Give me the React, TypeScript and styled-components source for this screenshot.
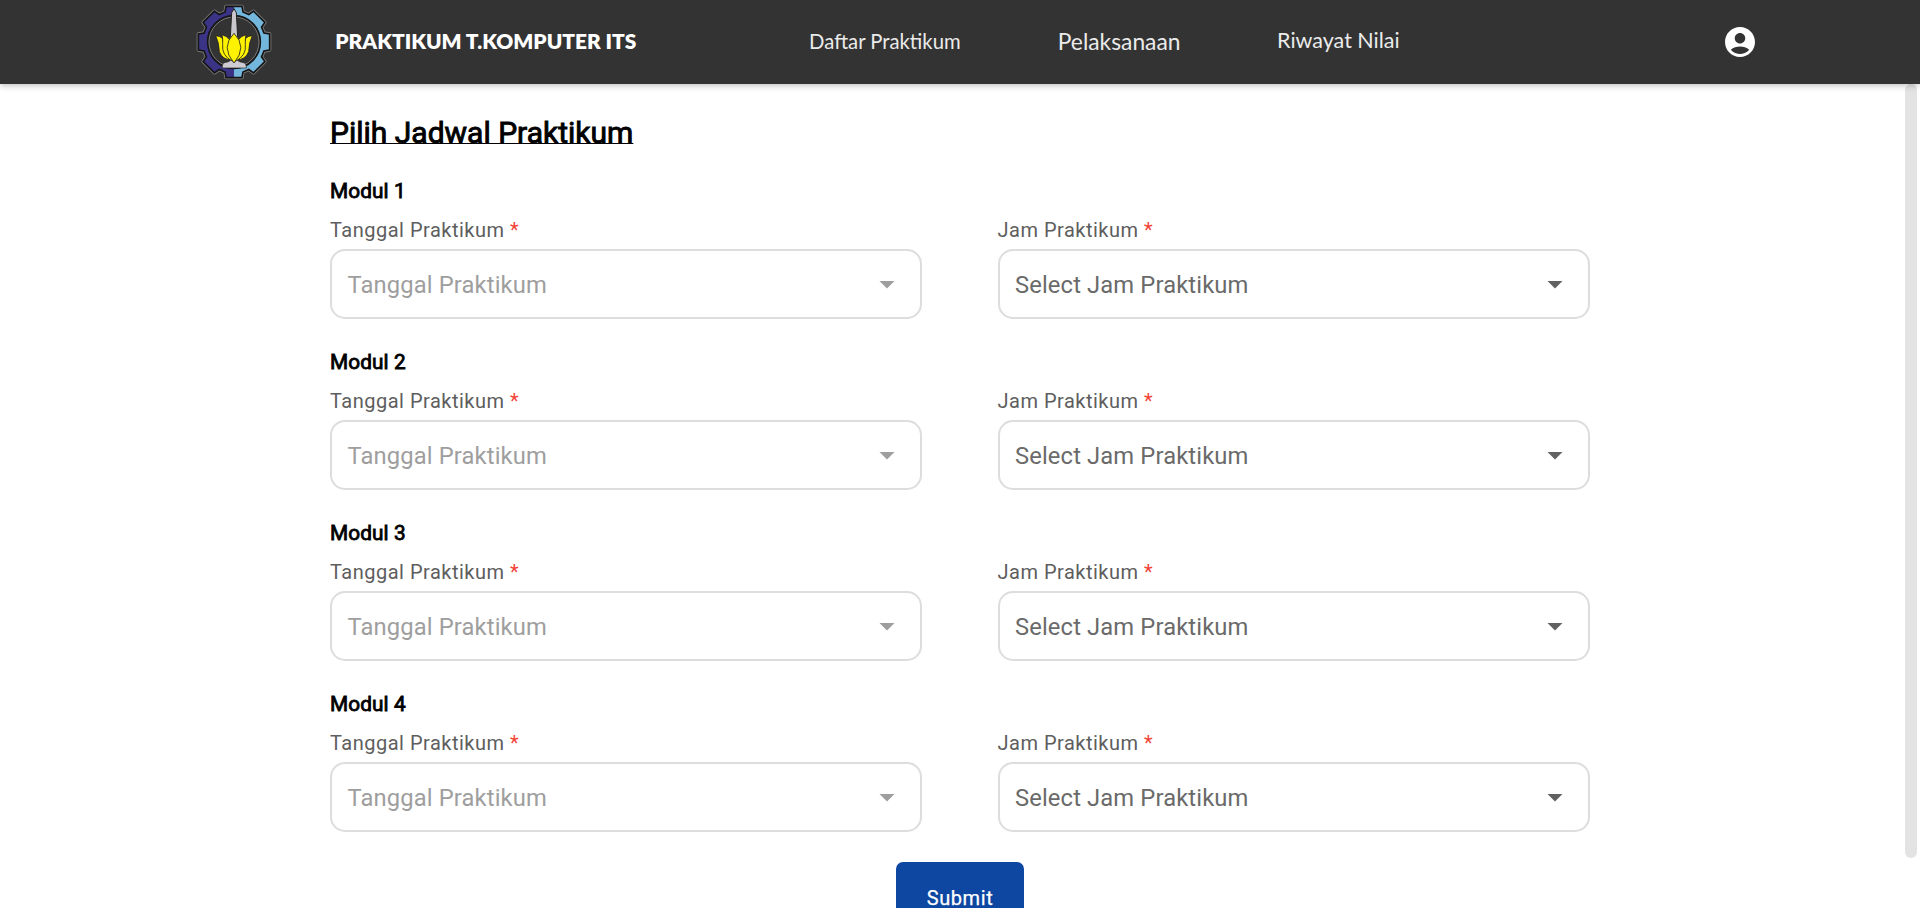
import React from 'react';
import styled, { createGlobalStyle } from 'styled-components';

const GlobalStyle = createGlobalStyle`
  *, *::before, *::after { box-sizing: border-box; }
  html, body { margin: 0; padding: 0; height: 100%; overflow: hidden; background: #fff; }
  body { font-family: Roboto, 'Liberation Sans', sans-serif; }
  h1, h2, p { margin: 0; font-weight: 400; }
`;

const Page = styled.div`
  height: 100vh;
  display: flex;
  flex-direction: column;
  overflow: hidden;
`;

const Header = styled.header`
  position: relative;
  z-index: 1;
  flex: none;
  height: 84px;
  padding-left: 194.7px;
  display: grid;
  grid-template-columns: 140.6px 473.8px 248.7px 219.3px 444.9px auto;
  align-items: center;
  background: #333;
  box-shadow: 0 2px 4px -1px rgba(0, 0, 0, 0.12), 0 4px 5px rgba(0, 0, 0, 0.07), 0 1px 10px rgba(0, 0, 0, 0.06);
`;

const Brand = styled.span`
  font: 800 20.9px/26px Lato, sans-serif;
  color: #fff;
  white-space: nowrap;
  padding-bottom: 1.4px;
`;

const NavLink = styled.a<{ $size: number; $lift: number }>`
  font: 400 ${(p) => p.$size}px/28px Lato, sans-serif;
  color: #ebebeb;
  white-space: nowrap;
  padding-bottom: ${(p) => p.$lift}px;
`;

const ProfileButton = styled.button`
  width: 36px;
  height: 36px;
  padding: 0;
  border: 0;
  background: none;
  color: #fff;
  svg { display: block; }
`;

const Body = styled.div`
  flex: 1;
  min-height: 0;
  display: flex;
  justify-content: space-between;
  align-items: flex-start;
`;

const Form = styled.form`
  width: 1260px;
  margin-left: 330px;
  padding-top: 31px;
  display: flex;
  flex-direction: column;
`;

const Title = styled.h1`
  align-self: flex-start;
  font-size: 30px;
  line-height: 36px;
  color: #000;
  -webkit-text-stroke: 0.9px #000;
  text-decoration: underline;
  text-decoration-thickness: 1px;
  text-underline-offset: 0;
  text-decoration-skip-ink: none;
`;

const Modules = styled.div`
  margin-top: 28px;
  display: flex;
  flex-direction: column;
  gap: 31px;
`;

const ModuleTitle = styled.h2`
  font-size: 20.8px;
  line-height: 24px;
  letter-spacing: 0.08px;
  color: #000;
  -webkit-text-stroke: 0.8px #000;
`;

const Fields = styled.div`
  margin-top: 15px;
  display: grid;
  grid-template-columns: 592px 592.5px;
  column-gap: 75.5px;
`;

const Label = styled.p`
  font-size: 20px;
  line-height: 24px;
  letter-spacing: 0.5px;
  color: #5e5e5e;
`;

const Required = styled.span`
  color: #f44336;
`;

const SelectBox = styled.div<{ $disabled?: boolean }>`
  margin-top: 7px;
  height: 70.4px;
  margin-bottom: -0.4px;
  padding: 0 15px 0 15.5px;
  border: 2px solid #ddd;
  border-radius: 15px;
  display: flex;
  align-items: center;
  justify-content: space-between;
  font-size: 23.75px;
  letter-spacing: 0.13px;
  color: ${(p) => (p.$disabled ? '#9e9e9e' : '#6a6a6a')};
  svg {
    display: block;
    color: ${(p) => (p.$disabled ? '#9e9e9e' : '#616161')};
  }
`;

const Placeholder = styled.span`
  padding-top: 2px;
`;

const SubmitButton = styled.button`
  align-self: center;
  flex: none;
  margin-top: 30.3px;
  width: 128px;
  height: 72px;
  padding: 0;
  border: 0;
  border-radius: 7px;
  background: #0d47a1;
  color: #fff;
  font: 400 20px/24px Roboto, sans-serif;
  letter-spacing: 0.6px;
  -webkit-text-stroke: 0.25px #fff;
`;

const ScrollThumb = styled.div`
  width: 12px;
  height: 774px;
  margin-right: 3px;
  border-radius: 6px;
  background: #e3e3e3;
`;

const gearPath = (() => {
  const points: string[] = [];
  for (let i = 0; i < 8; i++) {
    const a = (i * Math.PI) / 4;
    [[-27, -90], [-24, -107], [24, -107], [27, -90]].forEach(([x, y]) => {
      const px = 162 + x * Math.cos(a) - y * Math.sin(a);
      const py = 126 + x * Math.sin(a) + y * Math.cos(a);
      points.push(`${px.toFixed(1)} ${py.toFixed(1)}`);
    });
  }
  return `M${points.join('L')}Z`;
})();

const Logo = () => (
  <svg width="78" height="78" viewBox="45 9 234 234">
    <defs>
      <clipPath id="leftHalf"><rect x="40" y="0" width="122" height="260" /></clipPath>
      <clipPath id="rightHalf"><rect x="162" y="0" width="122" height="260" /></clipPath>
    </defs>
    <path d={gearPath} fill="#111" stroke="#7d7d7d" strokeWidth="10" strokeLinejoin="round" />
    <path d={gearPath} fill="#3b3486" stroke="#151515" strokeWidth="5" clipPath="url(#leftHalf)" />
    <path d={gearPath} fill="#74b7dc" stroke="#151515" strokeWidth="5" clipPath="url(#rightHalf)" />
    <circle cx="162" cy="126" r="79" fill="#333" stroke="#151515" strokeWidth="5" />
    <circle cx="162" cy="126" r="75" fill="none" stroke="#777" strokeWidth="3" />
    <path d="M151 112l4-74 7-12 7 12 4 74z" fill="#c9c7cc" stroke="#222" strokeWidth="3" />
    <path d="M127 204c0-13 3-16 12-17 10-2 14-6 15-14h16c1 8 5 12 15 14 9 1 14 4 14 17z" fill="#cfcbd2" stroke="#222" strokeWidth="2" />
    <g fill="#fff200" stroke="#222" strokeWidth="2.5" strokeLinejoin="round">
      <path d="M107 107q14 1 20 8 8 35 28 65-28-1-37-25-1-28-11-48z" />
      <path d="M217 107q-14 1-20 8-8 35-28 65 28-1 37-25 1-28 11-48z" />
      <path d="M126 104q14 4 22 14l10 66q-34-17-30-50 1-16-2-30z" />
      <path d="M198 104q-14 4-22 14l-10 66q34-17 30-50-1-16 2-30z" />
      <path d="M162 100q41 41 0 89q-41-48 0-89z" />
    </g>
  </svg>
);

const AccountIcon = () => (
  <svg width="36" height="36" viewBox="0 0 24 24" fill="currentColor">
    <path d="M12 2C6.48 2 2 6.48 2 12s4.48 10 10 10 10-4.48 10-10S17.52 2 12 2zm0 4c1.93 0 3.5 1.57 3.5 3.5S13.93 13 12 13s-3.5-1.57-3.5-3.5S10.07 6 12 6zm0 14c-2.03 0-4.43-.82-6.14-2.88C7.55 15.8 9.68 15 12 15s4.45.8 6.14 2.12C16.43 19.18 14.03 20 12 20z" />
  </svg>
);

const Caret = () => (
  <svg width="36" height="36" viewBox="0 0 24 24" fill="currentColor">
    <path d="M7 10l5 5 5-5z" />
  </svg>
);

const Field = ({ label, placeholder, disabled }: { label: string; placeholder: string; disabled?: boolean }) => (
  <div>
    <Label>{label} <Required>*</Required></Label>
    <SelectBox $disabled={disabled}>
      <Placeholder>{placeholder}</Placeholder>
      <Caret />
    </SelectBox>
  </div>
);

const modules = ['Modul 1', 'Modul 2', 'Modul 3', 'Modul 4'];

export default function App() {
  return (
    <Page>
      <GlobalStyle />
      <Header>
        <Logo />
        <Brand>PRAKTIKUM T.KOMPUTER ITS</Brand>
        <NavLink $size={20.3} $lift={1.6}>Daftar Praktikum</NavLink>
        <NavLink $size={22.8} $lift={2}>Pelaksanaan</NavLink>
        <NavLink $size={21.5} $lift={5}>Riwayat Nilai</NavLink>
        <ProfileButton type="button" aria-label="Profil"><AccountIcon /></ProfileButton>
      </Header>
      <Body>
        <Form>
          <Title>Pilih Jadwal Praktikum</Title>
          <Modules>
            {modules.map((name) => (
              <section key={name}>
                <ModuleTitle>{name}</ModuleTitle>
                <Fields>
                  <Field label="Tanggal Praktikum" placeholder="Tanggal Praktikum" disabled />
                  <Field label="Jam Praktikum" placeholder="Select Jam Praktikum" />
                </Fields>
              </section>
            ))}
          </Modules>
          <SubmitButton type="button">Submit</SubmitButton>
        </Form>
        <ScrollThumb />
      </Body>
    </Page>
  );
}
